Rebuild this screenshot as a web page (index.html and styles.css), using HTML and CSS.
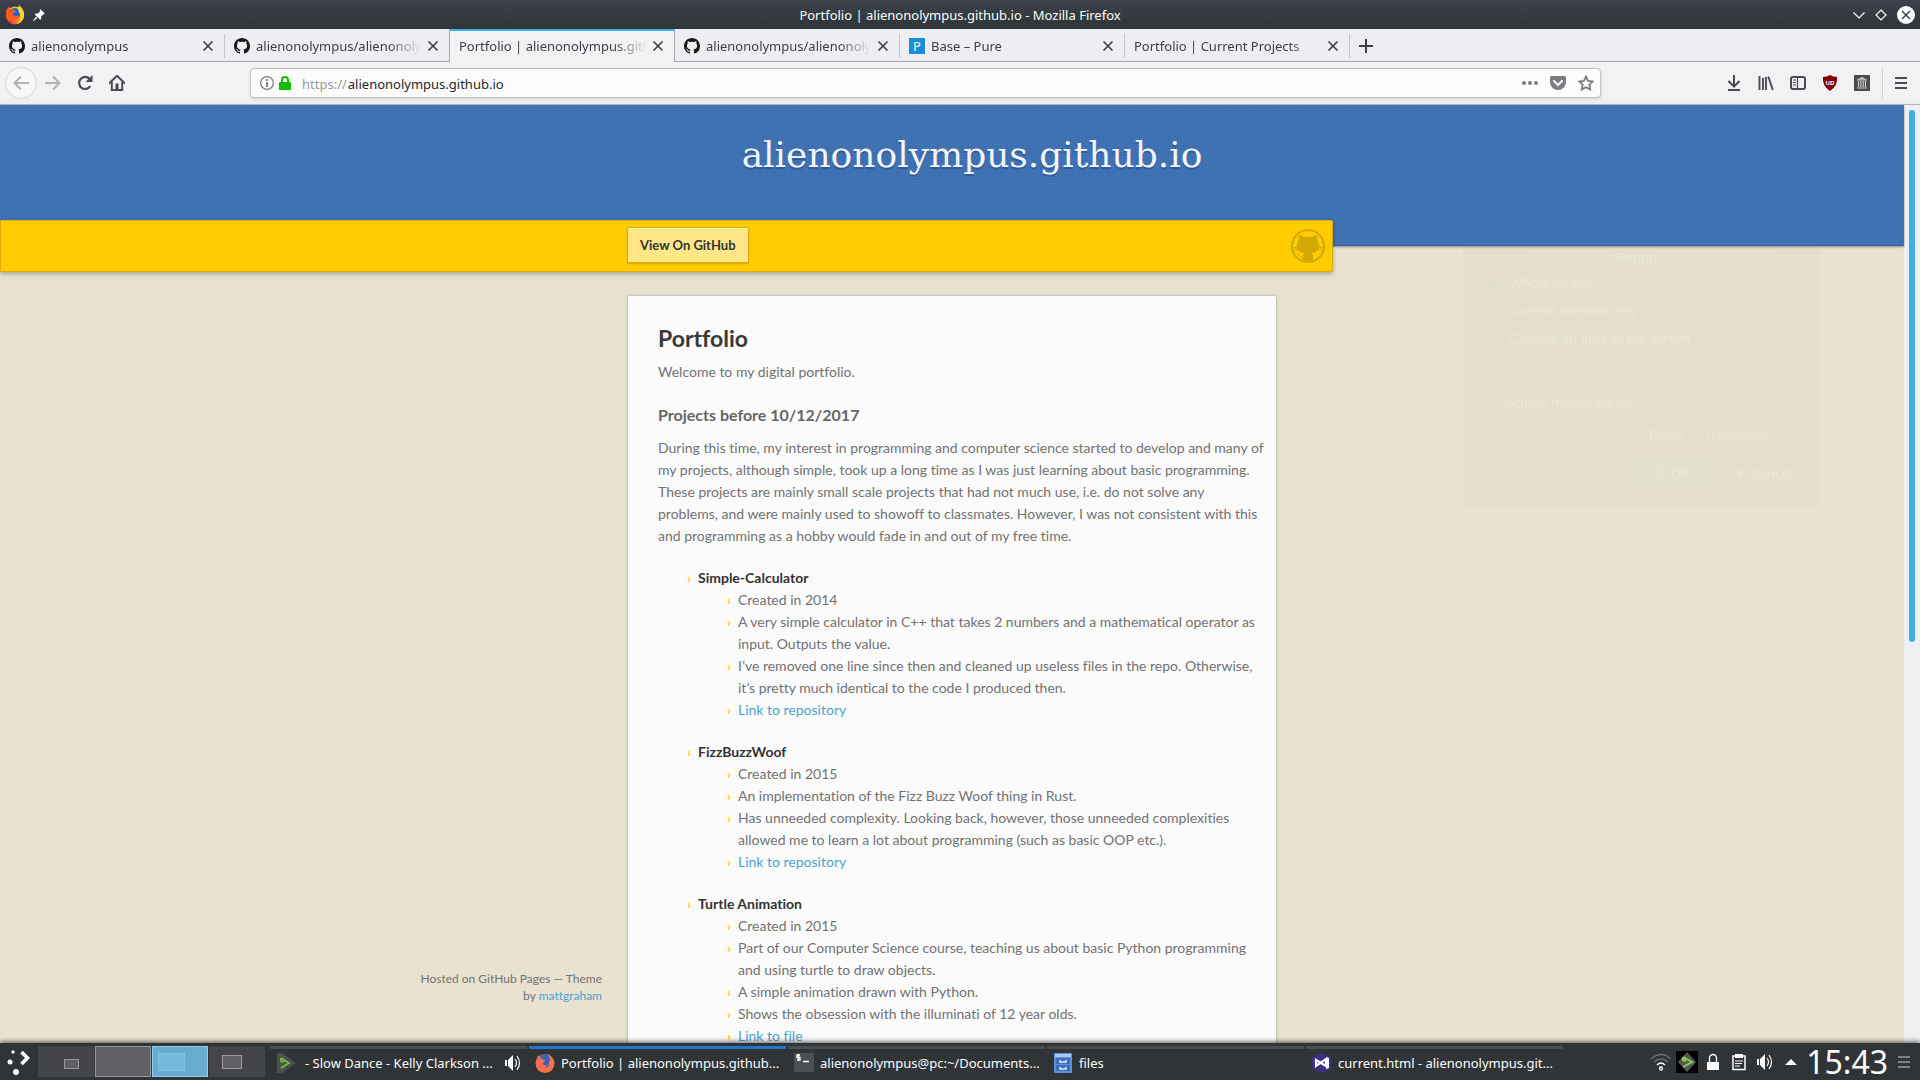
FILE: index.html
```html
<!DOCTYPE html>
<html lang="en">
<head>
<meta charset="utf-8">
<title>Portfolio | alienonolympus.github.io</title>
<link rel="stylesheet" href="styles.css">
</head>
<body>
<svg width="0" height="0" class="defs" aria-hidden="true">
  <defs>
    <linearGradient id="flame" x1="1" y1="0" x2="0" y2="1"><stop offset="0" stop-color="#fff44f"/><stop offset=".45" stop-color="#ff9a1f"/><stop offset="1" stop-color="#f0125a"/></linearGradient>
    <symbol id="octocat" viewBox="0 0 16 16"><path d="M8 0C3.58 0 0 3.58 0 8c0 3.54 2.29 6.53 5.47 7.59.4.07.55-.17.55-.38 0-.19-.01-.82-.01-1.49-2.01.37-2.53-.49-2.69-.94-.09-.23-.48-.94-.82-1.13-.28-.15-.68-.52-.01-.53.63-.01 1.08.58 1.23.82.72 1.21 1.87.87 2.33.66.07-.52.28-.87.51-1.07-1.78-.2-3.64-.89-3.64-3.95 0-.87.31-1.59.82-2.15-.08-.2-.36-1.02.08-2.12 0 0 .67-.21 2.2.82.64-.18 1.32-.27 2-.27s1.36.09 2 .27c1.53-1.04 2.2-.82 2.2-.82.44 1.1.16 1.92.08 2.12.51.56.82 1.27.82 2.15 0 3.07-1.87 3.75-3.65 3.95.29.25.54.73.54 1.48 0 1.07-.01 1.93-.01 2.2 0 .21.15.46.55.38A8.01 8.01 0 0 0 16 8c0-4.42-3.58-8-8-8z"/></symbol>
    <symbol id="close" viewBox="0 0 12 12"><path d="M1.500 1.500l9 9m0-9l-9 9" fill="none" stroke="currentColor" stroke-width="1.600"/></symbol>
    <symbol id="speaker" viewBox="0 0 16 16"><path d="M0 5h2v6H0zM3 5l5-5v16l-5-5z" fill="#fcfcfc"/><path d="M10 4q3 4 0 8M12 1q5 7 0 14" fill="none" stroke="#fcfcfc" stroke-width="1.200"/></symbol>
  </defs>
</svg>
<div class="desktop">
  <header class="titlebar">
    <div class="titlebar-side">
      <svg width="20" height="20" viewBox="0 0 20 20"><circle cx="10" cy="10.500" r="9" fill="url(#flame)"/><circle cx="10" cy="8.500" r="5.500" fill="#1566d8"/><path d="M1 6q2-4 3-4l2 3q4-1 5 2l-3 1q-1 3 3 3l4-1q-2 5-7 4-5 4-7-2z" fill="#ff5a1f"/><path d="M14 0q6 5 5 12-2 6-8 7 6-4 4-10-3-3-1-9z" fill="#ffd52e"/></svg>
      <svg width="12" height="12" viewBox="0 0 12 12"><path d="M7 0l5 4.500-1.500.7-2.500 2.500.2 2.300-1 .8L1.700 5.500l.8-1 2.500-.1L7.200 2zM3 7.700l1.500 1.200L.5 12 0 11.500z" fill="#fcfcfc"/></svg>
    </div>
    <div class="titlebar-text">Portfolio | alienonolympus.github.io - Mozilla Firefox</div>
    <div class="titlebar-side titlebar-controls">
      <button type="button" aria-label="Minimize"><svg width="12" height="18" viewBox="0 0 12 18"><path d="M.5 6.500L6 12l5.500-5.500" fill="none" stroke="#fcfcfc" stroke-width="1.200"/></svg></button>
      <button type="button" aria-label="Maximize"><svg width="12" height="18" viewBox="0 0 12 18"><path d="M6 4l5 5-5 5-5-5z" fill="none" stroke="#fcfcfc" stroke-width="1.200"/></svg></button>
      <button type="button" aria-label="Close window"><svg width="18" height="18" viewBox="0 0 18 18"><circle cx="9" cy="9" r="9" fill="#fcfcfc"/><path d="M5 5l8 8m0-8l-8 8" stroke="#31363b" stroke-width="1.300"/></svg></button>
    </div>
  </header>

  <nav class="tabs" aria-label="Tabs">
    <div class="tab"><svg class="fav" width="16" height="16"><use href="#octocat"/></svg><span class="tab-label">alienonolympus</span><button type="button" aria-label="Close tab"><svg width="12" height="12"><use href="#close"/></svg></button></div>
    <div class="tab tab-before"><svg class="fav" width="16" height="16"><use href="#octocat"/></svg><span class="tab-label">alienonolympus/alienonoly</span><button type="button" aria-label="Close tab"><svg width="12" height="12"><use href="#close"/></svg></button></div>
    <div class="tab tab-active"><span class="tab-label">Portfolio | alienonolympus.gith</span><button type="button" aria-label="Close tab"><svg width="12" height="12"><use href="#close"/></svg></button></div>
    <div class="tab"><svg class="fav" width="16" height="16"><use href="#octocat"/></svg><span class="tab-label">alienonolympus/alienonoly</span><button type="button" aria-label="Close tab"><svg width="12" height="12"><use href="#close"/></svg></button></div>
    <div class="tab"><span class="fav-p">P</span><span class="tab-label">Base – Pure</span><button type="button" aria-label="Close tab"><svg width="12" height="12"><use href="#close"/></svg></button></div>
    <div class="tab"><span class="tab-label">Portfolio | Current Projects</span><button type="button" aria-label="Close tab"><svg width="12" height="12"><use href="#close"/></svg></button></div>
    <button type="button" class="new-tab" aria-label="New tab"><svg width="14" height="14" viewBox="0 0 14 14"><path d="M7 0v14M0 7h14" stroke="currentColor" stroke-width="2"/></svg></button>
  </nav>

  <div class="toolbar">
    <div class="nav-buttons">
      <button type="button" class="back" aria-label="Back"><svg width="16" height="16" viewBox="0 0 16 16"><path d="M16 8H1.500M8 1.500L1.500 8 8 14.500" fill="none" stroke="#b0b1b3" stroke-width="2"/></svg></button>
      <button type="button" aria-label="Forward"><svg width="16" height="16" viewBox="0 0 16 16"><path d="M0 8h14.500M8 1.500L14.500 8 8 14.500" fill="none" stroke="#b0b1b3" stroke-width="2"/></svg></button>
      <button type="button" aria-label="Reload"><svg width="16" height="16" viewBox="0 0 16 16"><path d="M12.500 3.800A6 6 0 1 0 13.300 11" fill="none" stroke="#4a4b50" stroke-width="2.200"/><path d="M15.500 0v7H8.500z" fill="#4a4b50"/></svg></button>
      <button type="button" aria-label="Home"><svg width="16" height="16" viewBox="0 0 16 16"><path d="M0 8.500L8 .8l8 7.700M2.800 7v8h10.400V7" fill="none" stroke="#4a4b50" stroke-width="2"/><path d="M6.500 8.500h3V15h-3z" fill="#4a4b50"/></svg></button>
    </div>
    <div class="urlbar">
      <svg width="14" height="14" viewBox="0 0 14 14"><circle cx="7" cy="7" r="6.400" fill="none" stroke="#77787b" stroke-width="1.200"/><path d="M7 3v2M7 6v5" stroke="#77787b" stroke-width="1.800"/></svg>
      <svg width="12" height="14" viewBox="0 0 12 14"><path d="M3 6V4a3 3 0 0 1 6 0v2" fill="none" stroke="#12bc00" stroke-width="2"/><rect y="6" width="12" height="8" rx="1" fill="#12bc00"/></svg>
      <label class="scheme" for="url">https://</label><input id="url" type="text" value="alienonolympus.github.io">
      <button type="button" aria-label="Page actions"><svg width="16" height="16" viewBox="0 0 16 16"><g fill="#7b7c80"><circle cx="2" cy="8" r="2"/><circle cx="8" cy="8" r="2"/><circle cx="14" cy="8" r="2"/></g></svg></button>
      <button type="button" aria-label="Save to Pocket"><svg width="16" height="16" viewBox="0 0 16 16"><path d="M1.500 1h13Q16 1 16 2.500V7a8 8 0 0 1-16 0V2.500Q0 1 1.500 1z" fill="#7b7c80"/><path d="M4 6l4 4 4-4" fill="none" stroke="#fff" stroke-width="2" stroke-linecap="round"/></svg></button>
      <button type="button" aria-label="Bookmark"><svg width="16" height="16" viewBox="0 0 16 16"><path d="M8 1.500l2 4.300 4.800.6-3.500 3.200.9 4.900L8 12.200l-4.200 2.300.9-4.900L1.200 6.400 6 5.800z" fill="none" stroke="#7b7c80" stroke-width="1.800"/></svg></button>
    </div>
    <div class="tools">
      <button type="button" aria-label="Downloads"><svg width="16" height="16" viewBox="0 0 16 16"><path d="M8 0v11M2.500 6L8 11.500 13.500 6M2 15h12" fill="none" stroke="#4a4b50" stroke-width="2"/></svg></button>
      <button type="button" aria-label="Library"><svg width="16" height="16" viewBox="0 0 16 16"><path d="M1.500 1v14M5 3v12M8 2v13M10.300 1.500l4.500 13.500" fill="none" stroke="#4a4b50" stroke-width="1.900"/></svg></button>
      <button type="button" aria-label="Sidebars"><svg width="16" height="16" viewBox="0 0 16 16"><rect x="1" y="2" width="14" height="12" rx="2" fill="none" stroke="#4a4b50" stroke-width="2"/><path d="M7.500 2v12M3 5h3M3 7.500h3M3 10h3" stroke="#4a4b50" stroke-width="1.200"/></svg></button>
      <button type="button" class="ublock" aria-label="uBlock"><svg width="16" height="16" viewBox="0 0 16 16"><path d="M8 0q3 2 7 2 1 9-7 14Q0 11 1 2q4 0 7-2z" fill="#800000"/></svg><span>UD</span></button>
      <button type="button" aria-label="Archive"><svg width="16" height="16" viewBox="0 0 16 16"><rect width="16" height="16" rx="1" fill="#4b4b4b"/><path d="M3 4.500L8 2l5 2.500z" fill="#ccc"/><path d="M3 5h10M4.500 6v6M6.800 6v6M9.200 6v6M11.500 6v6M3 13h10" fill="none" stroke="#ccc" stroke-width="1.200"/></svg></button>
      <button type="button" class="menu" aria-label="Menu"><svg width="12" height="12" viewBox="0 0 12 12"><path d="M0 1h12M0 6h12M0 11h12" stroke="#4a4b50" stroke-width="2"/></svg></button>
    </div>
  </div>

  <div class="viewport">
    <div class="page">
      <header class="banner"><h1>alienonolympus.github.io</h1></header>
      <div class="ribbon">
        <button type="button" class="view">View On GitHub</button>
        <svg width="36" height="36" viewBox="0 0 36 36"><g fill="none" stroke="#d2a900"><circle cx="18" cy="18" r="16" stroke-width="2"/><path d="M7 26q3 0 4 3t5 2M2 20l7-1M2 23l7-2M34 20l-7-1M34 23l-7-2"/></g><path d="M9 7q3 0 5 2 4-1 8 0 2-2 5-2 1 3 0 5 2 2 2 6 0 6-7 7 1 1 1 3v6H13v-6q0-2 1-3-7-1-7-7 0-4 2-6-1-2 0-5z" fill="#d2a900"/></svg>
      </div>
      <div class="columns">
        <aside class="credits">Hosted on GitHub Pages — Theme<br>by <a href="#">mattgraham</a></aside>
        <main class="card">
          <h2>Portfolio</h2>
          <p>Welcome to my digital portfolio.</p>
          <h3>Projects before 10/12/2017</h3>
          <p>During this time, my interest in programming and computer science started to develop and many of<br>my projects, although simple, took up a long time as I was just learning about basic programming.<br>These projects are mainly small scale projects that had not much use, i.e. do not solve any<br>problems, and were mainly used to showoff to classmates. However, I was not consistent with this<br>and programming as a hobby would fade in and out of my free time.</p>
          <ul class="projects">
            <li><strong>Simple-Calculator</strong>
              <ul>
                <li>Created in 2014</li>
                <li>A very simple calculator in C++ that takes 2 numbers and a mathematical operator as<br>input. Outputs the value.</li>
                <li>I’ve removed one line since then and cleaned up useless files in the repo. Otherwise,<br>it’s pretty much identical to the code I produced then.</li>
                <li><a href="#">Link to repository</a></li>
              </ul>
            </li>
            <li><strong>FizzBuzzWoof</strong>
              <ul>
                <li>Created in 2015</li>
                <li>An implementation of the Fizz Buzz Woof thing in Rust.</li>
                <li>Has unneeded complexity. Looking back, however, those unneeded complexities<br>allowed me to learn a lot about programming (such as basic OOP etc.).</li>
                <li><a href="#">Link to repository</a></li>
              </ul>
            </li>
            <li><strong>Turtle Animation</strong>
              <ul>
                <li>Created in 2015</li>
                <li>Part of our Computer Science course, teaching us about basic Python programming<br>and using turtle to draw objects.</li>
                <li>A simple animation drawn with Python.</li>
                <li>Shows the obsession with the illuminati of 12 year olds.</li>
                <li><a href="#">Link to file</a></li>
              </ul>
            </li>
          </ul>
        </main>
      </div>
      <form class="ghost">
        <div class="ghost-title">Region</div>
        <label><input type="radio" name="area" checked>Whole screen</label>
        <label><input type="radio" name="area">Current window only</label>
        <label><input type="radio" name="area">Capture an area of the screen</label>
        <label class="ghost-check"><input type="checkbox">Include mouse cursor</label>
        <div class="ghost-delay"><span>Delay</span><span>0 seconds</span></div>
        <div class="ghost-actions"><button type="button" class="ghost-ok">✓ OK</button><button type="button">✕&nbsp; Cancel</button></div>
      </form>
    </div>
    <div class="scrollbar"><div class="thumb"></div></div>
  </div>

  <footer class="taskbar">
    <button type="button" class="launcher" aria-label="Applications"><svg width="24" height="26" viewBox="0 0 24 26"><g fill="#fcfcfc"><circle cx="6" cy="3" r="1.700"/><circle cx="3" cy="13" r="2.500"/><circle cx="9" cy="23" r="2.900"/></g><path d="M14.500 3l6 6-6 6" fill="none" stroke="#fcfcfc" stroke-width="3.600"/></svg></button>
    <div class="pager">
      <div class="desk"><span class="mini mini-one"></span></div>
      <div class="desk desk-full"></div>
      <div class="desk desk-current"><span class="mini mini-wide"></span></div>
      <div class="desk"><span class="mini"></span></div>
    </div>
    <div class="tasks">
      <button type="button" class="task"><svg width="20" height="20" viewBox="0 0 20 20"><path d="M1 0h5l14 10L6 20H1z" fill="#4d5053"/><path d="M5 5l8 5-8 5M5 5v3l3 1" fill="none" stroke="#76c22b" stroke-width="1.800"/></svg><span class="task-label">- Slow Dance - Kelly Clarkson ...</span><svg width="16" height="16"><use href="#speaker"/></svg></button>
      <button type="button" class="task task-active"><svg width="20" height="20" viewBox="0 0 20 20"><circle cx="10" cy="10.500" r="9.500" fill="#f0714f"/><path d="M5 3q6-4 10 0 2 9-3 11-5 1-6-3l3-1q-3-3-4-7z" fill="#3a62b4"/><path d="M3 2l3 4q4 0 4 2l-3 2q1 3 5 2-2 5-7 2L1 9zM13 1q4 2 4 7l-3 5q-1-4 1-6z" fill="#f0714f"/></svg><span class="task-label">Portfolio | alienonolympus.github...</span></button>
      <button type="button" class="task"><svg width="20" height="20" viewBox="0 0 20 20"><rect width="20" height="19" fill="#4d5053"/><path d="M6 2H3v2.500h3V7H3M4.500 1v7M9 8.500h6" fill="none" stroke="#fcfcfc" stroke-width="1.300"/></svg><span class="task-label">alienonolympus@pc:~/Documents...</span></button>
      <button type="button" class="task"><svg width="20" height="20" viewBox="0 0 20 20"><rect x="1" width="18" height="20" rx="1" fill="#5b93de"/><path d="M2 1h16v3H2z" fill="#a9c9f2"/><path d="M3 5h14v6H3zM3 12h14v6H3z" fill="#3c6fb8"/><path d="M7 7v2h6V7M7 14v2h6v-2" fill="none" stroke="#eee" stroke-width="1.400"/></svg><span class="task-label">files</span></button>
      <button type="button" class="task"><svg width="20" height="20" viewBox="0 0 20 20"><path d="M9 0l10 4v12l-10 4-9-5V5z" fill="#3b2f86"/><path d="M4 7l10 6V6L4 13z" fill="none" stroke="#fff" stroke-width="2.200"/><path d="M14 4l3 1v10l-3 1z" fill="#fff"/></svg><span class="task-label">current.html - alienonolympus.git...</span></button>
    </div>
    <div class="tray">
      <svg width="22" height="18" viewBox="0 0 22 18"><g fill="none" stroke-width="1.300"><path d="M1 6q10-9 20 0M4 9q7-6 14 0" stroke="#6b6f73"/><path d="M7 12q4-4 8 0" stroke="#fcfcfc"/><circle cx="11" cy="15.500" r="1.500" stroke="#fcfcfc"/></g></svg>
      <svg width="22" height="22" viewBox="0 0 22 22"><path d="M0 0h22v22H0z" fill="#000"/><path d="M11 1l9 10-9 10-9-10z" fill="#55585a"/><path d="M7 6l9 5-9 5M7 6v3l3 1" fill="none" stroke="#8bd04a" stroke-width="2"/></svg>
      <svg width="22" height="18" viewBox="0 0 22 18"><path d="M5 9h12v8H5z" fill="#fcfcfc"/><path d="M7.500 9V5a3.500 3.500 0 0 1 7 0v4" fill="none" stroke="#fcfcfc" stroke-width="1.300"/></svg>
      <svg width="22" height="18" viewBox="0 0 22 18"><path d="M5 3h12v13.500H5z" fill="none" stroke="#fcfcfc" stroke-width="1.500"/><path d="M7 1h8v4H7z" fill="#fcfcfc"/><path d="M7 8h8M7 10.500h7M7 13h5" stroke="#fcfcfc"/></svg>
      <svg width="16" height="16" class="tray-sound"><use href="#speaker"/></svg>
      <svg width="22" height="18" viewBox="0 0 22 18"><path d="M5 12l6-6 6 6z" fill="#fcfcfc"/></svg>
      <time class="clock">15:43</time>
      <svg width="12" height="12" viewBox="0 0 12 12"><path d="M0 1h12M0 6h12M0 11h12" stroke="#9a9da0" stroke-width="1.500"/></svg>
    </div>
  </footer>
</div>
</body>
</html>
```
FILE: styles.css
```css
* { box-sizing: border-box; }
body { margin: 0; font: 13px/18px "Noto Sans", sans-serif; color: #31363b; }
button { margin: 0; padding: 0; border: 0; background: none; font: inherit; color: inherit; display: flex; align-items: center; justify-content: center; }
svg { display: block; flex: none; }
.defs { position: absolute; }
.desktop { height: 100vh; display: flex; flex-direction: column; overflow: hidden; background: #eff0f1; }

.titlebar { flex: none; height: 29px; display: flex; align-items: center; padding: 0 5px; background: linear-gradient(#3d424c, #2f3437); color: #fcfcfc; }
.titlebar-side { flex: 1; display: flex; align-items: center; gap: 8px; }
.titlebar-controls { justify-content: flex-end; gap: 10px; }

.tabs { flex: none; height: 33px; display: flex; background: #edeef1; color: #3b3e42; box-shadow: inset 0 -1px #a5a7ab; }
.tab { position: relative; width: 225px; display: flex; align-items: center; gap: 6px; padding: 0 11px 0 9px; }
.tab::after { content: ""; position: absolute; right: 0; top: 5px; bottom: 4px; border-right: 1px solid #c4c5c8; }
.tab-label { flex: 1; min-width: 0; overflow: hidden; white-space: nowrap; -webkit-mask-image: linear-gradient(to left, transparent, #000 32px); mask-image: linear-gradient(to left, transparent, #000 32px); }
.tab-before::after, .tab-active::after { top: 0; bottom: 0; border-color: #a5a7ab; }
.tab-active { background: #f1f2f4; box-shadow: inset 0 2px #3daee9; }
.fav { fill: #1b1817; }
.fav-p { width: 16px; height: 16px; background: #1f8dd6; color: #fff; text-align: center; line-height: 16px; }
.new-tab { width: 32px; }

.toolbar { flex: none; height: 43px; display: flex; align-items: center; padding: 0 2px 0 5px; background: linear-gradient(#f1f2f4 80%, #eceef0); border-bottom: 1px solid #b6b8ba; }
.nav-buttons, .tools { display: flex; align-items: center; }
.nav-buttons button, .tools button { width: 32px; height: 32px; }
.nav-buttons .back { border: 1px solid #d3d4d6; border-radius: 50%; background: #f8f8f9; }
.tools { position: relative; }
.tools .menu { border-left: 1px solid #d3d4d6; width: 36px; margin-left: 4px; }
.ublock { position: relative; }
.ublock span { position: absolute; color: #fff; font: bold 6px/8px "Noto Sans", sans-serif; }
.urlbar { flex: 1; height: 30px; margin: 0 117px; display: flex; align-items: center; padding: 0 5px 0 9px; gap: 5px; border: 1px solid #c0c2c4; border-radius: 4px; background: #fcfcfc; box-shadow: 0 1px 3px #0002; }
.urlbar button { width: 18px; margin-left: 5px; }
.urlbar .scheme, .urlbar input { padding: 2px 0 0; }
.urlbar .scheme { margin-left: 6px; margin-right: -4px; color: #97999c; }
.urlbar input { flex: 1; min-width: 0; border: 0; background: none; font: inherit; color: #26282b; outline: none; }

.viewport { flex: 1; min-height: 0; display: flex; }
.page { position: relative; flex: 1; min-width: 0; display: flex; flex-direction: column; font: 14px/22px Lato, sans-serif; font-variant-ligatures: none; color: #727272; background: linear-gradient(45deg, #e5dfcb 0 12%, #e9e4d1 13% 38%, #e5dfcb 38% 62%, #e9e4d1 62% 88%, #e5dfcb 88%) 0 0 / 4px 4px; }
.page a { color: #4aa3d0; text-decoration: none; }
.banner { flex: none; height: 141px; padding: 20px 0 0 40px; text-align: center; background: linear-gradient(135deg, #ffffff08 50%, #0000 50%) 0 0 / 3px 3px, #3d70b2; border-bottom: 1px solid #3465a4; box-shadow: 0 1px 2px #0006; }
.banner h1 { margin: 0; font: 36px/60px "DejaVu Serif", serif; color: #f3f4f6; text-shadow: 0 2px #2d5b9a; }
.ribbon { position: relative; flex: none; width: 70%; height: 52px; margin-top: -26px; padding: 0 6px 0 calc(50vw - 334px); display: flex; align-items: center; justify-content: space-between; background: #ffcc00; border: 1px solid #e0aa0a; border-radius: 0 2px 2px 0; box-shadow: 0 2px 4px #0004; }
.view { height: 36px; padding: 0 12px; margin-bottom: 2px; border: 1px solid #e0aa0a; border-radius: 2px; background: #ffe788; box-shadow: inset 0 1px #fff2bd, 0 1px 2px #0003; font-size: 13px; font-weight: bold; color: #333; }
.columns { flex: 1; min-height: 0; overflow: hidden; display: grid; grid-template-columns: 1fr 650px 1fr; grid-template-rows: 100%; }
.credits { align-self: end; padding: 0 25px 39px 0; text-align: right; font-size: 12px; line-height: 17px; }
.card { height: max-content; margin-top: 23px; padding: 30px; border: 1px solid #c8c8c8; border-radius: 3px; background: #fbfbfb; white-space: nowrap; box-shadow: 0 0 3px #0002; }
.card h2 { margin: 0 0 10px; font-size: 23px; line-height: 25px; color: #393939; }
.card h3 { margin: 0 0 10px; font-size: 16px; line-height: 24px; color: #666; }
.card p { margin: 0 0 20px; }
.card ul { margin: 0; padding-left: 40px; list-style: "›\00a0\00a0"; }
.card li::marker { color: #ffcc00; font-weight: bold; }
.projects > li { margin-bottom: 20px; }
.card strong { color: #333; }

.ghost { position: absolute; right: 84px; top: 141px; width: 357px; height: 260px; padding: 0 28px 13px 16px; display: flex; flex-direction: column; font: 13px/28px "Noto Sans", sans-serif; color: #fff; background: #00000018; opacity: .16; }
.ghost label { display: flex; align-items: center; gap: 9px; padding-left: 8px; }
.ghost input { margin: 0; width: 14px; height: 14px; opacity: .15; }
.ghost-title { text-align: center; line-height: 22px; }
.ghost .ghost-check { padding-left: 0; margin-top: 36px; }
.ghost-delay { display: flex; gap: 24px; justify-content: flex-end; padding-right: 24px; margin-top: 5px; }
.ghost-actions { display: flex; justify-content: flex-end; gap: 20px; margin-top: 8px; }
.ghost-ok { width: 82px; background: #d8f0dc80; }
.ghost-ok, .ghost-actions button { height: 32px; }

.scrollbar { flex: none; width: 16px; padding: 5px 5px 0; background: #eff0f1; }
.thumb { width: 6px; height: 57%; border-radius: 3px; background: #3daee9; }

.taskbar { position: relative; flex: none; height: 37px; padding: 3px 10px 3px 0; display: flex; align-items: stretch; color: #fcfcfc; background: #303437; box-shadow: 0 -1px 5px #000a; }
.launcher { width: 38px; }
.pager { display: flex; gap: 1px; }
.desk { width: 56px; display: flex; align-items: center; justify-content: center; background: #434549; }
.desk-full { background: #5f6063; border: 1px solid #999; }
.desk-current { background: #67accf; border: 1px solid #8ed0f0; justify-content: flex-start; padding-left: 5px; }
.mini { width: 20px; height: 14px; margin-right: 10px; border: 1px solid #999; background: #5f6063; }
.mini-one { width: 15px; height: 10px; margin: 4px 0 0 10px; }
.mini-wide { width: 27px; height: 18px; background: #75b8dc; border-color: #81c4e6; }
.tasks { flex: 1; max-width: 1293px; min-width: 0; margin-left: 5px; display: flex; gap: 2px; }
.task { flex: 1; min-width: 0; justify-content: flex-start; gap: 6px; padding: 0 6px 1px; border-top: 3px solid #4b4e51; }
.task-active { border-top-color: #2277cb; }
.task-label { flex: 1; min-width: 0; overflow: hidden; white-space: nowrap; text-align: left; }
.task:first-child .task-label { padding-left: 3px; }
.tray { flex: none; margin-left: auto; display: flex; align-items: center; gap: 4px; }
.tray-sound { margin: 0 3px; }
.clock { font-size: 32px; line-height: 32px; margin: 1px 6px 0 0; }
```
